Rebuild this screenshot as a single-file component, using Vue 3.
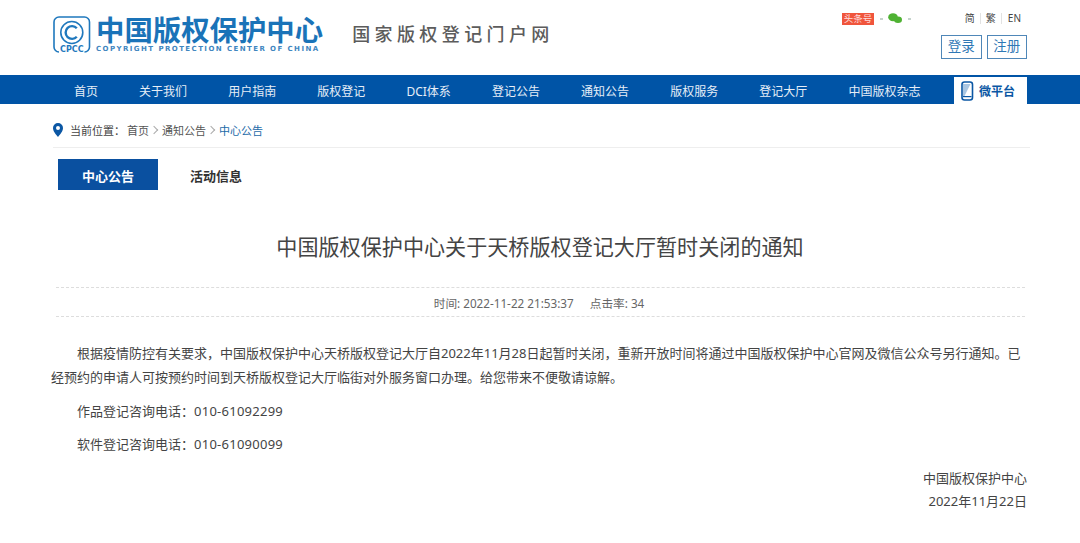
<template>
  <div class="page">
    <header class="top">
      <div class="brand">
        <svg class="logo-mark" width="38" height="38" viewBox="0 0 38 38">
          <rect x="1" y="1" width="35.500" height="35" rx="5" fill="none" stroke="#1f78bd" stroke-width="1.600" />
          <rect x="6" y="30" width="25.500" height="8" fill="#fff" />
          <circle cx="18.800" cy="16.500" r="11" fill="none" stroke="#1f78bd" stroke-width="1.600" />
          <path d="M23.800 12.200a6.400 6.400 0 1 0 0 8.600" fill="none" stroke="#1f78bd" stroke-width="2.400" />
          <text x="18.800" y="36" text-anchor="middle" class="mark-text">CPCC</text>
        </svg>
        <div class="brand-text">
          <div class="brand-cn">中国版权保护中心</div>
          <div class="brand-en">COPYRIGHT PROTECTION CENTER OF CHINA</div>
        </div>
        <div class="slogan">国家版权登记门户网</div>
      </div>
      <div class="top-right">
        <div class="top-links">
          <div class="social">
            <span class="toutiao">头条号</span>
            <i class="dot"></i>
            <svg width="14" height="11" viewBox="0 0 14 11">
              <ellipse cx="5" cy="4.200" rx="4.800" ry="4" fill="#4fb233" />
              <ellipse cx="10" cy="6.800" rx="4" ry="3.300" fill="#4fb233" />
            </svg>
            <i class="dot"></i>
          </div>
          <div class="langs">
            <span>简</span><span>繁</span><span>EN</span>
          </div>
        </div>
        <div class="auth">
          <a class="auth-btn">登录</a>
          <a class="auth-btn">注册</a>
        </div>
      </div>
    </header>

    <nav class="nav">
      <div class="nav-list">
        <a v-for="item in navItems" :key="item" class="nav-item">{{ item }}</a>
      </div>
      <a class="nav-wx">
        <svg width="13" height="20" viewBox="0 0 13 20">
          <rect x="1" y="1" width="10.500" height="18" rx="2.500" fill="none" stroke="#0b57a4" stroke-width="1.600" />
          <path d="M2 3h7.500L3.500 15H2z" fill="#a9c6e2" />
          <rect x="2" y="15" width="8.500" height="1.200" fill="#0b57a4" />
        </svg>
        <span>微平台</span>
      </a>
    </nav>

    <div class="crumb">
      <svg width="10" height="14" viewBox="0 0 10 14">
        <path fill-rule="evenodd" d="M5 0a5 5 0 0 1 5 5c0 3.300-3 6.500-5 9-2-2.500-5-5.700-5-9a5 5 0 0 1 5-5zm0 3a2 2 0 1 0 0 4 2 2 0 0 0 0-4z" fill="#0b57a4" />
      </svg>
      <span class="crumb-label">当前位置：</span>
      <span>首页</span>
      <span class="crumb-sep"></span>
      <span>通知公告</span>
      <span class="crumb-sep"></span>
      <span class="crumb-now">中心公告</span>
    </div>

    <div class="tabs">
      <a class="tab active">中心公告</a>
      <a class="tab">活动信息</a>
    </div>

    <h1 class="title">中国版权保护中心关于天桥版权登记大厅暂时关闭的通知</h1>

    <div class="meta">
      <span>时间: 2022-11-22 21:53:37</span>
      <span>点击率: 34</span>
    </div>

    <article class="content">
      <p class="first">根据疫情防控有关要求，中国版权保护中心天桥版权登记大厅自2022年11月28日起暂时关闭，重新开放时间将通过中国版权保护中心官网及微信公众号另行通知。已经预约的申请人可按预约时间到天桥版权登记大厅临街对外服务窗口办理。给您带来不便敬请谅解。</p>
      <p>作品登记咨询电话：<span class="phone">010-61092299</span></p>
      <p class="last">软件登记咨询电话：<span class="phone">010-61090099</span></p>
      <div class="sign">
        <div>中国版权保护中心</div>
        <div>2022年11月22日</div>
      </div>
    </article>
  </div>
</template>

<script setup>
const navItems = ['首页', '关于我们', '用户指南', '版权登记', 'DCI体系', '登记公告', '通知公告', '版权服务', '登记大厅', '中国版权杂志']
</script>

<style>
html, body {
  margin: 0;
  background: #fff;
}
</style>

<style scoped>
.page {
  width: 1080px;
  height: 543px;
  overflow: hidden;
  font-family: "Noto Sans", "Noto Sans CJK SC", sans-serif;
  color: #444;
}

.top {
  height: 75px;
  display: flex;
  justify-content: space-between;
  padding: 0 53px;
  box-sizing: border-box;
}

.brand {
  display: flex;
  align-items: flex-start;
  padding-top: 16px;
}

.logo-mark {
  margin-right: 5px;
}

.mark-text {
  font: bold 8px "DejaVu Sans", sans-serif;
  fill: #1f78bd;
}

.brand-cn {
  font-size: 28.400px;
  line-height: 28px;
  font-weight: 700;
  color: #1a73b8;
  white-space: nowrap;
}

.brand-en {
  margin-top: 1px;
  font: bold 7px/8px "DejaVu Sans", sans-serif;
  letter-spacing: 1.430px;
  color: #3f86bf;
  white-space: nowrap;
}

.slogan {
  margin: 7px 0 0 29px;
  font-size: 18px;
  line-height: 22px;
  font-weight: 500;
  letter-spacing: 4.400px;
  color: #5c5c5c;
  white-space: nowrap;
}

.top-right {
  width: 185px;
  padding-top: 12px;
}

.top-links {
  height: 13px;
  display: flex;
  justify-content: space-between;
  align-items: center;
  font-size: 10px;
}

.social {
  display: flex;
  align-items: center;
  gap: 5.500px;
}

.toutiao {
  width: 32px;
  height: 12px;
  line-height: 12px;
  text-align: center;
  font-size: 9.500px;
  color: #fdd;
  background: #f0553c;
}

.dot {
  width: 3px;
  height: 2px;
  background: #c5d3cc;
}

.langs {
  display: flex;
  margin-right: 6px;
}

.langs span {
  padding: 0 5px;
  line-height: 11px;
  border-left: 1px solid #e2e2e2;
}

.langs span:first-child {
  border-left: none;
}

.langs span:last-child {
  padding: 0 0 0 6px;
}

.auth {
  margin-top: 10px;
  display: flex;
  justify-content: flex-end;
  gap: 5px;
}

.auth-btn {
  width: 38.500px;
  height: 22px;
  line-height: 21px;
  text-align: center;
  font-size: 13.500px;
  color: #2f78b5;
  border: 1px solid #4f87b8;
}

.nav {
  height: 29px;
  background: #0054a6;
  display: flex;
  align-items: center;
  justify-content: space-between;
  padding: 0 53px 0 74px;
}

.nav-list {
  display: flex;
  gap: 41.100px;
}

.nav-item {
  padding-top: 2px;
  font-size: 12px;
  color: #e6eef7;
  white-space: nowrap;
}

.nav-wx {
  flex: none;
  width: 68px;
  height: 28px;
  margin-top: 2px;
  padding-right: 5px;
  background: #fff;
  display: flex;
  align-items: center;
  justify-content: center;
  gap: 5px;
  font-size: 12px;
  font-weight: 700;
  color: #0b57a4;
}

.crumb {
  height: 35px;
  padding-top: 8px;
  margin: 0 50px 0 53px;
  border-bottom: 1px solid #eee;
  display: flex;
  align-items: center;
  font-size: 11px;
  color: #555;
}

.crumb-label {
  margin: 0 2px 0 7px;
  color: #444;
}

.crumb-sep {
  width: 5px;
  height: 5px;
  margin: 0 5px 0 2px;
  border-top: 1px solid #aaa;
  border-right: 1px solid #aaa;
  transform: rotate(45deg);
}

.crumb-now {
  color: #1c6aa8;
}

.tabs {
  display: flex;
  margin: 11px 0 0 58px;
  gap: 8px;
}

.tab {
  width: 100px;
  height: 31px;
  line-height: 34px;
  text-align: center;
  font-size: 13px;
  font-weight: 700;
  color: #333;
}

.tab.active {
  background: #0a50a0;
  color: #fff;
}

.title {
  margin: 42px 0 0;
  text-align: center;
  font-size: 21.100px;
  line-height: 30px;
  font-weight: 400;
  color: #444;
}

.meta {
  margin: 25px 55px 0 56px;
  padding-right: 3px;
  height: 28px;
  border-top: 1px dashed #ddd;
  border-bottom: 1px dashed #ddd;
  display: flex;
  justify-content: center;
  align-items: center;
  gap: 16px;
  font-size: 11.700px;
  color: #666;
}

.content {
  padding: 0 53px 0 51px;
  font-size: 13px;
  line-height: 24px;
  color: #444;
}

.content p {
  margin: 10px 0 0;
  text-indent: 2em;
}

.content p.first {
  margin-top: 24px;
}

.content p.last {
  margin-top: 9px;
}

.phone {
  letter-spacing: 0.250px;
}

.sign {
  margin-top: 11px;
  text-align: right;
  line-height: 23px;
}
</style>
